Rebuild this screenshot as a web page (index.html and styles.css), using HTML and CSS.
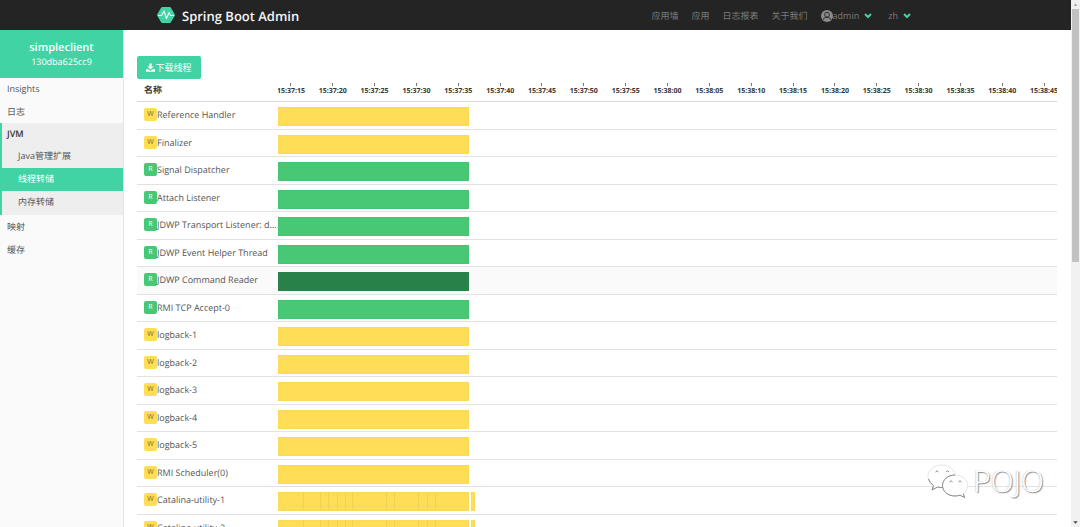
FILE: index.html
```html
<!DOCTYPE html>
<html lang="zh">
<head>
<meta charset="utf-8">
<title>Spring Boot Admin</title>
<link rel="stylesheet" href="styles.css">
</head>
<body>
<div class="app">
  <header class="navbar">
    <a class="brand" href="#">
      <svg class="brand-logo" viewBox="0 0 18 16" aria-hidden="true"><path d="M5.3 0h7.4q.8 0 1.2.7l3.7 6.4q.5.9 0 1.8l-3.7 6.4q-.4.7-1.2.7H5.3q-.8 0-1.2-.7L.4 8.9q-.5-.9 0-1.8L4.1.7Q4.5 0 5.3 0z" fill="#42d3a5"/><path d="M1 8.500h3.500L7 4l2.500 7.500L12 5.500l1.500 3H17" fill="none" stroke="#e8fff7" stroke-width="1.200" stroke-linejoin="round"/></svg>
      <span>Spring Boot Admin</span>
    </a>
    <nav class="menu">
      <a href="#">应用墙</a>
      <a href="#">应用</a>
      <a href="#">日志报表</a>
      <a href="#">关于我们</a>
      <button class="drop" type="button"><svg class="user" viewBox="0 0 12 12" aria-hidden="true"><circle cx="6" cy="6" r="6" fill="#8a8a8a"/><circle cx="6" cy="4.700" r="2.400" fill="#8a8a8a" stroke="#242424" stroke-width=".9"/><path d="M2.200 9.800q.6-2.300 2.400-2.300h2.800q1.800 0 2.400 2.300" fill="none" stroke="#242424" stroke-width=".9"/></svg>admin<svg class="chev" viewBox="0 0 8 6" aria-hidden="true"><path d="M1 1l3 3 3-3"/></svg></button>
      <button class="drop lang" type="button">zh<svg class="chev" viewBox="0 0 8 6" aria-hidden="true"><path d="M1 1l3 3 3-3"/></svg></button>
    </nav>
  </header>
  <div class="body">
    <aside class="sidebar">
      <a class="instance" href="#"><strong>simpleclient</strong><span>130dba625cc9</span></a>
      <ul class="side-list">
        <li><a href="#">Insights</a></li>
        <li><a href="#">日志</a></li>
        <li class="group">
          <a class="current" href="#">JVM</a>
          <ul>
            <li><a href="#">Java管理扩展</a></li>
            <li><a class="active" href="#">线程转储</a></li>
            <li><a href="#">内存转储</a></li>
          </ul>
        </li>
        <li><a href="#">映射</a></li>
        <li><a href="#">缓存</a></li>
      </ul>
    </aside>
    <main class="content">
      <button class="download" type="button"><svg viewBox="0 0 16 16" aria-hidden="true"><path d="M6 1h4v5h3.500L8 11.500 2.500 6H6zM0 11h4.500L8 14l3.500-3H16v4.500H0z" fill="#fff"/></svg>下载线程</button>
      <table class="threads">
        <thead>
          <tr><th class="name">名称</th><th class="time"><div class="axis"><span>15:37:15</span><span>15:37:20</span><span>15:37:25</span><span>15:37:30</span><span>15:37:35</span><span>15:37:40</span><span>15:37:45</span><span>15:37:50</span><span>15:37:55</span><span>15:38:00</span><span>15:38:05</span><span>15:38:10</span><span>15:38:15</span><span>15:38:20</span><span>15:38:25</span><span>15:38:30</span><span>15:38:35</span><span>15:38:40</span><span>15:38:45</span></div></th></tr>
        </thead>
        <tbody>
          <tr><td class="name"><b class="tag w">W</b>Reference Handler</td><td class="time"><div class="bar w"></div></td></tr>
          <tr><td class="name"><b class="tag w">W</b>Finalizer</td><td class="time"><div class="bar w"></div></td></tr>
          <tr><td class="name"><b class="tag r">R</b>Signal Dispatcher</td><td class="time"><div class="bar r"></div></td></tr>
          <tr><td class="name"><b class="tag r">R</b>Attach Listener</td><td class="time"><div class="bar r"></div></td></tr>
          <tr><td class="name"><b class="tag r">R</b>JDWP Transport Listener: d...</td><td class="time"><div class="bar r"></div></td></tr>
          <tr><td class="name"><b class="tag r">R</b>JDWP Event Helper Thread</td><td class="time"><div class="bar r"></div></td></tr>
          <tr class="hover"><td class="name"><b class="tag r">R</b>JDWP Command Reader</td><td class="time"><div class="bar dark"></div></td></tr>
          <tr><td class="name"><b class="tag r">R</b>RMI TCP Accept-0</td><td class="time"><div class="bar r"></div></td></tr>
          <tr><td class="name"><b class="tag w">W</b>logback-1</td><td class="time"><div class="bar w"></div></td></tr>
          <tr><td class="name"><b class="tag w">W</b>logback-2</td><td class="time"><div class="bar w"></div></td></tr>
          <tr><td class="name"><b class="tag w">W</b>logback-3</td><td class="time"><div class="bar w"></div></td></tr>
          <tr><td class="name"><b class="tag w">W</b>logback-4</td><td class="time"><div class="bar w"></div></td></tr>
          <tr><td class="name"><b class="tag w">W</b>logback-5</td><td class="time"><div class="bar w"></div></td></tr>
          <tr><td class="name"><b class="tag w">W</b>RMI Scheduler(0)</td><td class="time"><div class="bar w"></div></td></tr>
          <tr><td class="name"><b class="tag w">W</b>Catalina-utility-1</td><td class="time"><div class="bars"><div class="bar w split"></div><div class="bar w tail"></div></div></td></tr>
          <tr><td class="name"><b class="tag w">W</b>Catalina-utility-2</td><td class="time"><div class="bars"><div class="bar w split"></div><div class="bar w tail"></div></div></td></tr>
        </tbody>
      </table>
    </main>
  </div>
</div>
<div class="scroll" aria-hidden="true">
  <svg viewBox="0 0 10 9"><path d="M3 6l2-2.500L7 6z" fill="#999"/></svg>
  <div class="thumb"></div>
  <svg class="down" viewBox="0 0 10 9"><path d="M2.500 3L5 6l2.500-3z" fill="#444"/></svg>
</div>
<div class="watermark">
  <svg viewBox="0 0 42 34" aria-hidden="true">
    <g fill="#fff" stroke="#e6e6e6"><path d="M15 1C7 1 1 6 1 12.500c0 4 2 7 5.500 9L5 26l5.500-3q3 .8 6 .5C29 23 29 16 28.500 11 27 5 21.500 1 15 1z"/><path d="M28 11c-7 0-12.500 4.500-12.500 10.500S21 32 28 32q2.500 0 5-.8l4.500 2.300-1.200-4C39 27.500 40.500 25 40.500 21.500 40.500 15.500 35 11 28 11z"/></g>
    <g fill="none" stroke="#888"><path d="M1.500 15q1 4 5 6.500L5 26l5.500-3q3 .7 5 .5M28 11c-7 0-12.500 4.500-12.500 10.500S21 32 28 32q2.500 0 5-.8l4.500 2.300-1.200-4"/><path d="M8.500 8q1.500-2.500 3 0M19 8q1.500-2.500 3 0M22.500 18q1.500-2.500 3 0M31.500 18q1.500-2.500 3 0"/></g>
  </svg>
  <span>POJO</span>
</div>
</body>
</html>
```
FILE: styles.css
```css
* { box-sizing: border-box; }
body {
  margin: 0;
  height: 100vh;
  display: flex;
  overflow: hidden;
  background: #fff;
  color: #555;
  font: 9px/14px "Open Sans", "Noto Sans CJK SC", sans-serif;
  text-rendering: geometricPrecision;
}
a { color: inherit; text-decoration: none; }
ul { list-style: none; margin: 0; padding: 0; }
button { border: 0; font: inherit; cursor: pointer; }
.app { flex: 1; min-width: 0; display: flex; flex-direction: column; }

.navbar {
  flex: none;
  height: 30px;
  display: flex;
  align-items: center;
  justify-content: space-between;
  padding: 0 160px 0 157px;
  background: #242424;
}
.brand { display: flex; align-items: center; gap: 7px; color: #f5f5f5; font-size: 13px; font-weight: 600; padding-top: 2px; }
.brand-logo { width: 18px; height: 16px; margin-top: -2px; }
.menu { display: flex; align-items: center; gap: 13px; color: #7c7c7c; padding-top: 1px; }
.drop { display: flex; align-items: center; padding: 0; background: none; color: inherit; }
.drop.lang { margin-left: 3px; }
.user { width: 12px; height: 12px; }
.chev { width: 8px; height: 6px; margin-left: 5px; fill: none; stroke: #42d3a5; stroke-width: 2; }

.body { flex: 1; min-height: 0; display: flex; }
.sidebar { flex: none; width: 124px; background: #fafafa; border-right: 1px solid #e4e4e4; }
.instance {
  height: 48px;
  display: flex;
  flex-direction: column;
  align-items: center;
  padding-top: 10px;
  background: #42d3a5;
  color: #fff;
}
.instance strong { font-size: 11px; line-height: 15px; font-weight: 600; }
.side-list > li > a { display: block; padding: 4px 7px; }
.side-list > li > a, .group li a { height: 23px; }
.group { background: #eee; border-left: 2px solid #42d3a5; margin: -1px 0 1px; padding-bottom: 1px; }
.side-list > .group > .current { height: 22px; padding-left: 5px; font-weight: 600; color: #363636; }
.group li a { display: block; padding: 4px 16px; }
.group li .active { background: #42d3a5; color: #fff; }

.content { flex: 1; min-width: 0; padding: 26px 14px 0 13px; }
.download {
  display: flex;
  align-items: center;
  justify-content: center;
  width: 64px;
  height: 23px;
  padding: 0;
  border-radius: 2px;
  background: #42d3a5;
  color: #fff;
}
.download svg { width: 9px; height: 9px; }

.threads { width: 100%; table-layout: fixed; border-collapse: separate; border-spacing: 0; }
.threads th, .threads td { padding: 0; vertical-align: top; text-align: left; border-bottom: 1px solid #e2e2e2; }
.threads th { height: 23px; color: #363636; border-color: #d8d8d8; }
.threads .name { width: 141px; padding: 6px 0 0 7px; white-space: nowrap; }
.threads th.name { padding-top: 4px; }
.threads tr:nth-child(odd) td { height: 28px; }
.threads tr:nth-child(even) td { height: 27px; }
.threads .time { overflow: hidden; }
.threads td.time { padding-top: 5px; }
.hover td { background: #fafafa; }
.axis { display: flex; width: calc(100% + 16px); margin-left: -8px; padding-top: 4px; }
.axis span { flex: 1 1 0; display: flex; flex-direction: column; align-items: center; font-size: 7px; line-height: 11px; }
.axis span::before { content: ""; width: 1px; height: 3px; background: #777; }
.tag {
  display: inline-block;
  width: 13px;
  height: 13px;
  border-radius: 2px;
  text-align: center;
  vertical-align: top;
  font-size: 7px;
  line-height: 14px;
  font-weight: 400;
}
.bar { width: 24.5%; height: 19px; }
.w { background: #ffdd57; color: #846d1d; }
.r { background: #48c774; color: #fff; }
.bar.w { border: 1px solid #fad957; }
.bar.r { border: 1px solid #47c472; }
.bar.dark { background: #288148; }
.bars { display: flex; gap: 2px; }
.bar.tail { width: 4px; }
.bar.split {
  background-image: linear-gradient(#f3d150, #f3d150), linear-gradient(#f3d150, #f3d150), linear-gradient(#f3d150, #f3d150), linear-gradient(#f3d150, #f3d150), linear-gradient(#f3d150, #f3d150), linear-gradient(#f3d150, #f3d150), linear-gradient(#f3d150, #f3d150), linear-gradient(#f3d150, #f3d150), linear-gradient(#f3d150, #f3d150), linear-gradient(#f3d150, #f3d150), linear-gradient(#f3d150, #f3d150);
  background-size: 1px 100%;
  background-repeat: no-repeat;
  background-position: 13% 0, 22% 0, 26% 0, 31% 0, 35% 0, 39% 0, 57% 0, 61% 0, 74% 0, 79% 0, 83% 0;
}

.scroll { flex: none; width: 9px; display: flex; flex-direction: column; background: #f1f1f1; }
.scroll svg { flex: none; width: 9px; height: 9px; }
.thumb { height: 48%; margin: 0 1px; background: #c1c1c1; }
.scroll .down { margin-top: auto; }

.watermark { position: absolute; right: 36px; bottom: 29px; display: flex; align-items: center; gap: 4px; }
.watermark svg { width: 42px; height: 34px; }
.watermark span { color: #fff; font: 300 30px/34px "Open Sans", sans-serif; text-shadow: 1px 1px 1px #888, -1px 0 1px #ddd; }
```
